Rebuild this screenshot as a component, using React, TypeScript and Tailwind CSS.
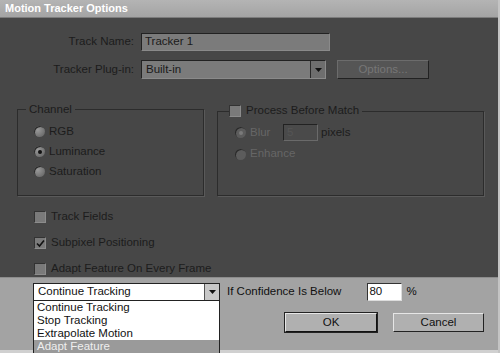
import React from 'react';

function Radio({ label, checked = false, disabled = false }: { label: string; checked?: boolean; disabled?: boolean }) {
  return (
    <div className="flex items-center gap-[4px] h-[14px]">
      <span
        className={`flex items-center justify-center w-[11px] h-[11px] rounded-full ${
          disabled ? 'bg-[#5c5c5c]' : 'bg-[radial-gradient(circle_at_35%_35%,#9a9a9a,#5e5e5e)]'
        } shadow-[inset_1px_1px_0_#2a2a2a]`}
      >
        {checked && <span className={`w-[4px] h-[4px] rounded-full ${disabled ? 'bg-[#7a7a7a]' : 'bg-[#111]'}`} />}
      </span>
      <span className={disabled ? 'text-[#666]' : 'text-[#1c1c1c]'}>{label}</span>
    </div>
  );
}

function Check({ label, checked = false }: { label: string; checked?: boolean }) {
  return (
    <div className="flex items-center gap-[5px] h-[14px]">
      <span className="flex items-center justify-center w-[12px] h-[12px] bg-[#7a7a7a] border-t border-l border-[#333] border-r border-b border-r-[#8c8c8c] border-b-[#8c8c8c]">
        {checked && (
          <svg width="9" height="9" viewBox="0 0 9 9">
            <path d="M1 4.5 L3.5 7 L8 1.5" stroke="#111" strokeWidth="1.6" fill="none" />
          </svg>
        )}
      </span>
      <span className="text-[#1c1c1c]">{label}</span>
    </div>
  );
}

function Arrow({ dark = false }: { dark?: boolean }) {
  return (
    <span
      className={`flex items-center justify-center w-[15px] h-full border-l ${
        dark ? 'bg-[#6e6e6e] border-[#2a2a2a]' : 'bg-[#c8c8c8] border-[#555]'
      }`}
    >
      <svg width="7" height="4" viewBox="0 0 7 4">
        <path d="M0 0 L7 0 L3.5 4 Z" fill="#111" />
      </svg>
    </span>
  );
}

export default function App() {
  return (
    <div
      className="w-[500px] h-[353px] flex flex-col bg-[#474747] border-r-2 border-r-[#c4c4c4] overflow-hidden text-[11.5px] leading-none"
      style={{ fontFamily: '"Liberation Sans", Arial, sans-serif' }}
    >
      <div className="h-[18px] shrink-0 flex items-center pl-[5px] bg-[linear-gradient(#b4b4b4,#a4a4a4)] border-b border-[#7c7c7c] text-white font-bold text-[11px]">
        Motion Tracker Options
      </div>

      <div className="flex-1 flex flex-col pt-[15px]">
        <div className="flex items-center h-[18px]">
          <span className="w-[134px] text-right text-[#1c1c1c]">Track Name:</span>
          <div className="ml-[7px] w-[189px] h-[18px] flex items-center pl-[3px] bg-[#7b7b7b] border-t border-l border-[#222] border-r border-b border-r-[#8a8a8a] border-b-[#8a8a8a] text-[#1a1a1a]">
            Tracker 1
          </div>
        </div>

        <div className="flex items-center h-[19px] mt-[9px]">
          <span className="w-[134px] text-right text-[#1c1c1c]">Tracker Plug-in:</span>
          <div className="ml-[7px] w-[185px] h-[19px] flex items-center bg-[#7b7b7b] border-t border-l border-[#222] border-r border-b border-r-[#8a8a8a] border-b-[#8a8a8a] text-[#1a1a1a]">
            <span className="flex-1 pl-[4px]">Built-in</span>
            <Arrow dark />
          </div>
          <div className="ml-[11px] w-[92px] h-[19px] flex items-center justify-center bg-[#555] border-t border-l border-[#6c6c6c] border-r border-b border-r-[#222] border-b-[#222] text-[#777]">
            Options...
          </div>
        </div>

        <div className="flex mt-[25px] pl-[17px] gap-[13px]">
          <fieldset className="w-[187px] h-[92px] border border-[#2c2c2c] shadow-[1px_1px_0_#5a5a5a] pl-[8px]">
            <legend className="px-[3px] text-[#1c1c1c]">Channel</legend>
            <div className="flex flex-col gap-[6px] mt-[9px] ml-[8px]">
              <Radio label="RGB" />
              <Radio label="Luminance" checked />
              <Radio label="Saturation" />
            </div>
          </fieldset>
          <fieldset className="w-[267px] h-[92px] border border-[#2c2c2c] shadow-[1px_1px_0_#5a5a5a] pl-[11px]">
            <legend className="pr-[3px]">
              <Check label="Process Before Match" />
            </legend>
            <div className="flex flex-col gap-[6px] mt-[6px] ml-[6px]">
              <div className="flex items-center h-[17px]">
                <div className="w-[48px]">
                  <Radio label="Blur" checked disabled />
                </div>
                <div className="w-[35px] h-[17px] flex items-center pl-[3px] bg-[#4a4a4a] border-t border-l border-[#222] border-r border-b border-r-[#6a6a6a] border-b-[#6a6a6a] text-[#555]">
                  5
                </div>
                <span className="ml-[3px] text-[#1c1c1c]">pixels</span>
              </div>
              <Radio label="Enhance" disabled />
            </div>
          </fieldset>
        </div>

        <div className="flex flex-col gap-[12px] pl-[34px] mt-[14px]">
          <Check label="Track Fields" />
          <Check label="Subpixel Positioning" checked />
          <Check label="Adapt Feature On Every Frame" />
        </div>
      </div>

      <div className="h-[76px] shrink-0 bg-[#a3a3a3] border-t border-[#8c8c8c] border-b-[3px] border-b-[#d0d0d0] pt-[5px] pl-[33px] text-[11.5px]">
        <div className="flex items-center h-[18px]">
          <div className="relative w-[187px] h-[18px]">
            <div className="w-full h-full flex items-center bg-white border border-[#222] text-[#111]">
              <span className="flex-1 pl-[4px]">Continue Tracking</span>
              <Arrow />
            </div>
            <div className="absolute left-0 top-[18px] w-[187px] flex flex-col bg-white border border-[#222] border-t-0 text-[#111]">
              <span className="h-[13px] pl-[3px] flex items-center">Continue Tracking</span>
              <span className="h-[13px] pl-[3px] flex items-center">Stop Tracking</span>
              <span className="h-[13px] pl-[3px] flex items-center">Extrapolate Motion</span>
              <span className="h-[14px] pl-[3px] flex items-center bg-[#9a9a9a] text-[#eee]">Adapt Feature</span>
            </div>
          </div>
          <span className="ml-[7px] text-[#111]">If Confidence Is Below</span>
          <div className="ml-[26px] w-[35px] h-[18px] flex items-center pl-[1px] bg-white border-t border-l border-[#333] border-r border-b border-r-[#ddd] border-b-[#ddd] text-[#111]">
            80
          </div>
          <span className="ml-[4px] text-[#111]">%</span>
        </div>
        <div className="flex mt-[12px] pl-[252px] gap-[16px]">
          <div className="w-[92px] h-[19px] flex items-center justify-center bg-[#b0b0b0] border-t border-l border-[#e6e6e6] border-r border-b border-r-[#111] border-b-[#111] shadow-[0_0_0_1px_#222] text-[#111]">
            OK
          </div>
          <div className="w-[91px] h-[19px] flex items-center justify-center bg-[#b0b0b0] border-t border-l border-[#e6e6e6] border-r border-b border-r-[#222] border-b-[#222] text-[#111]">
            Cancel
          </div>
        </div>
      </div>
    </div>
  );
}
